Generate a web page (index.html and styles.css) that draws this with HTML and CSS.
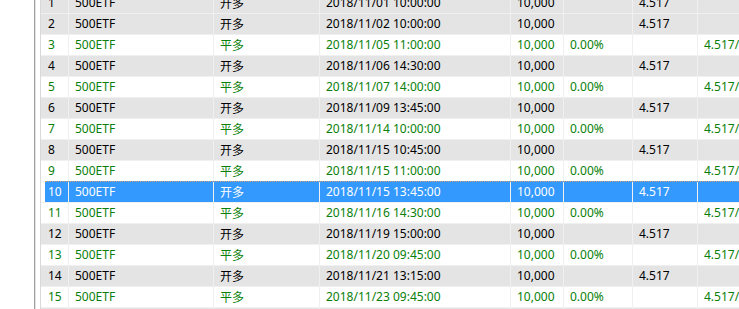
FILE: index.html
```html
<!DOCTYPE html>
<html>
<head>
<meta charset="utf-8">
<link rel="stylesheet" href="styles.css">
</head>
<body>
<div class="frame">
  <div class="side"></div>
  <div class="split"></div>
  <div class="gap"></div>
  <div class="edge"></div>
  <div class="grid">
    <div class="row buy"><div class="gut"></div><div class="c c1">1</div><div class="c c2">500ETF</div><div class="c c3">开多</div><div class="c c4">2018/11/01 10:00:00</div><div class="c c5">10,000</div><div class="c c6"></div><div class="c c7">4.517</div><div class="c c8"></div></div>
    <div class="row buy"><div class="gut"></div><div class="c c1">2</div><div class="c c2">500ETF</div><div class="c c3">开多</div><div class="c c4">2018/11/02 10:00:00</div><div class="c c5">10,000</div><div class="c c6"></div><div class="c c7">4.517</div><div class="c c8"></div></div>
    <div class="row sell"><div class="gut"></div><div class="c c1">3</div><div class="c c2">500ETF</div><div class="c c3">平多</div><div class="c c4">2018/11/05 11:00:00</div><div class="c c5">10,000</div><div class="c c6">0.00%</div><div class="c c7"></div><div class="c c8">4.517/4.517</div></div>
    <div class="row buy"><div class="gut"></div><div class="c c1">4</div><div class="c c2">500ETF</div><div class="c c3">开多</div><div class="c c4">2018/11/06 14:30:00</div><div class="c c5">10,000</div><div class="c c6"></div><div class="c c7">4.517</div><div class="c c8"></div></div>
    <div class="row sell"><div class="gut"></div><div class="c c1">5</div><div class="c c2">500ETF</div><div class="c c3">平多</div><div class="c c4">2018/11/07 14:00:00</div><div class="c c5">10,000</div><div class="c c6">0.00%</div><div class="c c7"></div><div class="c c8">4.517/4.517</div></div>
    <div class="row buy"><div class="gut"></div><div class="c c1">6</div><div class="c c2">500ETF</div><div class="c c3">开多</div><div class="c c4">2018/11/09 13:45:00</div><div class="c c5">10,000</div><div class="c c6"></div><div class="c c7">4.517</div><div class="c c8"></div></div>
    <div class="row sell"><div class="gut"></div><div class="c c1">7</div><div class="c c2">500ETF</div><div class="c c3">平多</div><div class="c c4">2018/11/14 10:00:00</div><div class="c c5">10,000</div><div class="c c6">0.00%</div><div class="c c7"></div><div class="c c8">4.517/4.517</div></div>
    <div class="row buy"><div class="gut"></div><div class="c c1">8</div><div class="c c2">500ETF</div><div class="c c3">开多</div><div class="c c4">2018/11/15 10:45:00</div><div class="c c5">10,000</div><div class="c c6"></div><div class="c c7">4.517</div><div class="c c8"></div></div>
    <div class="row sell"><div class="gut"></div><div class="c c1">9</div><div class="c c2">500ETF</div><div class="c c3">平多</div><div class="c c4">2018/11/15 11:00:00</div><div class="c c5">10,000</div><div class="c c6">0.00%</div><div class="c c7"></div><div class="c c8">4.517/4.517</div></div>
    <div class="row buy sel"><div class="gut"></div><div class="cells"><div class="c c1">10</div><div class="c c2">500ETF</div><div class="c c3">开多</div><div class="c c4">2018/11/15 13:45:00</div><div class="c c5">10,000</div><div class="c c6"></div><div class="c c7">4.517</div><div class="c c8"></div></div></div>
    <div class="row sell"><div class="gut"></div><div class="c c1">11</div><div class="c c2">500ETF</div><div class="c c3">平多</div><div class="c c4">2018/11/16 14:30:00</div><div class="c c5">10,000</div><div class="c c6">0.00%</div><div class="c c7"></div><div class="c c8">4.517/4.517</div></div>
    <div class="row buy"><div class="gut"></div><div class="c c1">12</div><div class="c c2">500ETF</div><div class="c c3">开多</div><div class="c c4">2018/11/19 15:00:00</div><div class="c c5">10,000</div><div class="c c6"></div><div class="c c7">4.517</div><div class="c c8"></div></div>
    <div class="row sell"><div class="gut"></div><div class="c c1">13</div><div class="c c2">500ETF</div><div class="c c3">平多</div><div class="c c4">2018/11/20 09:45:00</div><div class="c c5">10,000</div><div class="c c6">0.00%</div><div class="c c7"></div><div class="c c8">4.517/4.517</div></div>
    <div class="row buy"><div class="gut"></div><div class="c c1">14</div><div class="c c2">500ETF</div><div class="c c3">开多</div><div class="c c4">2018/11/21 13:15:00</div><div class="c c5">10,000</div><div class="c c6"></div><div class="c c7">4.517</div><div class="c c8"></div></div>
    <div class="row sell"><div class="gut"></div><div class="c c1">15</div><div class="c c2">500ETF</div><div class="c c3">平多</div><div class="c c4">2018/11/23 09:45:00</div><div class="c c5">10,000</div><div class="c c6">0.00%</div><div class="c c7"></div><div class="c c8">4.517/4.517</div></div>
    <div class="row buy"><div class="gut"></div><div class="c c1">16</div><div class="c c2">500ETF</div><div class="c c3">开多</div><div class="c c4">2018/11/26 10:00:00</div><div class="c c5">10,000</div><div class="c c6"></div><div class="c c7">4.517</div><div class="c c8"></div></div>
  </div>
</div>
</body>
</html>
```
FILE: styles.css
```css
html, body {
  margin: 0;
  padding: 0;
  background: #fff;
  overflow: hidden;
}
body {
  width: 739px;
  height: 309px;
}
.frame {
  display: flex;
  height: 309px;
  overflow: hidden;
  font-family: "Noto Sans", "Noto Sans CJK SC", sans-serif;
  font-size: 12px;
}
.side {
  width: 34px;
  flex: none;
  background: #fff;
}
.split {
  width: 1px;
  flex: none;
  background: #a0a0a0;
  border-right: 1px solid #e3e3e3;
}
.gap {
  width: 4px;
  flex: none;
  background: #fff;
}
.edge {
  width: 1px;
  flex: none;
  background: #d9d9d9;
}
.grid {
  flex: 1;
  display: flex;
  flex-direction: column;
  margin-top: -7px;
  min-width: 0;
}
.row {
  display: flex;
  height: 20px;
  flex: none;
  border-bottom: 1px solid #f0f0f0;
  line-height: 20px;
  white-space: nowrap;
}
.row.buy { background: #e4e4e4; color: #000; }
.row.sell { background: #fff; color: #0a800a; }
.gut {
  width: 4px;
  flex: none;
}
.cells {
  display: flex;
  flex: 1;
  min-width: 0;
}
.row.sel .gut { background: #fff; }
.row.sel .cells {
  background: #3399ff;
  color: #fff;
  border-top: 1px dotted #d0a070;
  margin-top: -1px;
}
.c {
  flex: none;
  box-sizing: border-box;
  padding-left: 6px;
  border-right: 1px solid #f0f0f0;
  overflow: hidden;
}
.c1 { width: 24px; padding-left: 3px; }
.c2 { width: 145px; }
.c3 { width: 106px; font-family: "Noto Sans CJK SC", sans-serif; }
.c4 { width: 191px; }
.c5 { width: 53px; }
.c6 { width: 69px; }
.c7 { width: 65px; }
.c8 { flex: 1; width: auto; border-right: none; }
```
